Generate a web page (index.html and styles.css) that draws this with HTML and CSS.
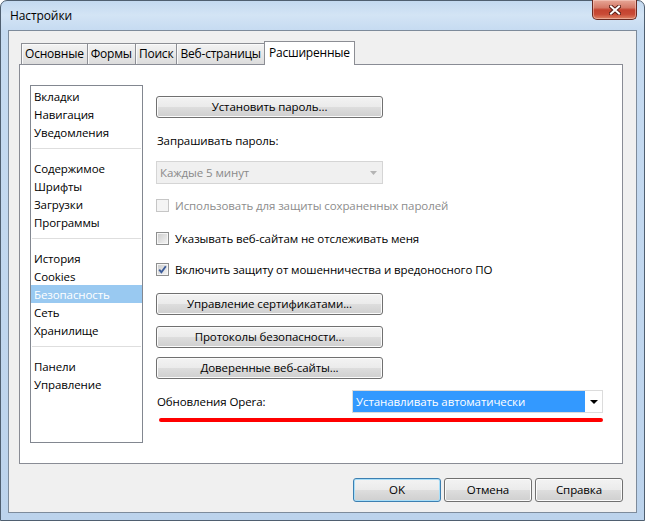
FILE: index.html
```html
<!DOCTYPE html>
<html lang="ru">
<head>
<meta charset="utf-8">
<title>Настройки</title>
<link rel="stylesheet" href="styles.css">
</head>
<body>
<div class="window">
  <div class="titlebar">
    <span class="title">Настройки</span>
    <div class="close">
      <svg width="12" height="10" viewBox="0 0 12 10"><path d="M2 1.5 L10 8.5 M10 1.5 L2 8.5" stroke="#5a1f17" stroke-width="4" stroke-linecap="square" fill="none"/><path d="M2 1.5 L10 8.5 M10 1.5 L2 8.5" stroke="#fff" stroke-width="2" stroke-linecap="square" fill="none"/></svg>
    </div>
  </div>
  <div class="client">
    <div class="tabs">
      <div class="tab t1">Основные</div>
      <div class="tab t2">Формы</div>
      <div class="tab t3">Поиск</div>
      <div class="tab t4">Веб-страницы</div>
      <div class="tab active t5">Расширенные</div>
    </div>
    <div class="panel">
      <div class="sidebar">
        <div class="item">Вкладки</div>
        <div class="item">Навигация</div>
        <div class="item">Уведомления</div>
        <div class="sep"></div>
        <div class="item">Содержимое</div>
        <div class="item">Шрифты</div>
        <div class="item">Загрузки</div>
        <div class="item">Программы</div>
        <div class="sep"></div>
        <div class="item">История</div>
        <div class="item">Cookies</div>
        <div class="item selected">Безопасность</div>
        <div class="item">Сеть</div>
        <div class="item">Хранилище</div>
        <div class="sep"></div>
        <div class="item">Панели</div>
        <div class="item">Управление</div>
      </div>
      <div class="content">
        <div class="btn wide m-pass">Установить пароль...</div>
        <div class="label m-ask">Запрашивать пароль:</div>
        <div class="combo disabled m-combo">
          <span class="combo-text">Каждые 5 минут</span>
          <span class="combo-arrow"><svg width="7" height="4" viewBox="0 0 7 4"><path d="M0 0 H7 L3.5 4 Z" fill="#b4b4b4"/></svg></span>
        </div>
        <div class="check disabled m-c1"><span class="cb"></span><span>Использовать для защиты сохраненных паролей</span></div>
        <div class="check m-c2"><span class="cb"></span><span>Указывать веб-сайтам не отслеживать меня</span></div>
        <div class="check m-c3"><span class="cb"><svg width="11" height="11" viewBox="0 0 11 11"><path d="M2.2 5.6 L4.4 8.2 L8.8 2.2" stroke="#3c5c9a" stroke-width="1.9" fill="none"/></svg></span><span>Включить защиту от мошенничества и вредоносного ПО</span></div>
        <div class="btn wide m-b1">Управление сертификатами...</div>
        <div class="btn wide m-b2">Протоколы безопасности...</div>
        <div class="btn wide m-b3">Доверенные веб-сайты...</div>
        <div class="update-row">
          <span class="update-label">Обновления Opera:</span>
          <div class="combo sel">
            <span class="combo-text">Устанавливать автоматически</span>
            <span class="combo-arrow"><svg width="8" height="4" viewBox="0 0 8 4"><path d="M0 0 H8 L4 4 Z" fill="#000"/></svg></span>
          </div>
        </div>
        <div class="redline"></div>
      </div>
    </div>
    <div class="footer">
      <div class="btn dlg default">OK</div>
      <div class="btn dlg">Отмена</div>
      <div class="btn dlg">Справка</div>
    </div>
  </div>
</div>
</body>
</html>
```
FILE: styles.css
```css
* { box-sizing: border-box; }
html, body { margin: 0; padding: 0; }
body {
  width: 645px;
  height: 521px;
  overflow: hidden;
  background: #fff;
  font-family: "Open Sans", "Noto Sans", "DejaVu Sans", sans-serif;
  font-size: 11.5px;
  letter-spacing: -0.1px;
  color: #000;
}
.window {
  width: 645px;
  height: 521px;
  border: 1px solid #4f5f70;
  border-radius: 7px 7px 0 0;
  background: linear-gradient(180deg, #c3d9f0 0px, #d3e4f5 14px, #c6dbf1 29px, #bcd3ec 100%);
  padding: 0 7px 7px 7px;
  display: flex;
  flex-direction: column;
}
.titlebar {
  height: 29px;
  display: flex;
  justify-content: space-between;
  align-items: flex-start;
  padding-left: 2px;
}
.title {
  margin-top: 7px;
  line-height: 16px;
  font-size: 12px;
}
.close {
  margin-top: -1px;
  width: 45px;
  height: 20px;
  border: 1px solid #6a2a22;
  border-top: none;
  border-radius: 0 0 5px 5px;
  background: linear-gradient(180deg, #e7a797 0%, #d57a68 40%, #c44330 52%, #c94a36 75%, #de8466 100%);
  box-shadow: inset 0 0 0 1px rgba(255,220,210,0.45);
  display: flex;
  align-items: center;
  justify-content: center;
}
.client {
  flex: 1;
  background: #f0f0f0;
  border: 1px solid #7d8b9b;
  padding: 10px 13px 0 10px;
  display: flex;
  flex-direction: column;
}
.tabs {
  height: 24px;
  margin-bottom: -1px;
  margin-left: 2px;
  display: flex;
  align-items: flex-start;
  position: relative;
  z-index: 1;
}
.tab {
  height: 21px;
  margin-top: 2px;
  margin-right: -1px;
  border: 1px solid #8c8e94;
  border-bottom: none;
  background: linear-gradient(180deg, #f3f3f3 0%, #e8e8e8 50%, #dcdcdc 100%);
  box-shadow: inset 1px 1px 0 #fafafa;
  padding: 0 3px;
  line-height: 20px;
  font-size: 12px;
  letter-spacing: -0.2px;
  white-space: nowrap;
}
.tab.active {
  height: 24px;
  margin-top: 0;
  margin-left: 0;
  background: #fff;
  box-shadow: none;
  line-height: 21px;
  padding: 0 4px;
  position: relative;
  z-index: 2;
}
.tab:nth-child(4) { margin-right: 0; border-right: none; }
.panel {
  height: 400px;
  background: #fff;
  border: 1px solid #898c95;
  padding: 20px 0 0 10px;
  display: flex;
  align-items: flex-start;
}
.sidebar {
  width: 113px;
  height: 358px;
  border: 1px solid #828790;
  padding-top: 1px;
}
.item {
  height: 18px;
  line-height: 19px;
  padding-left: 3px;
  white-space: nowrap;
}
.item.selected {
  background: #99c9f1;
  color: #fff;
}
.sep {
  height: 18px;
  position: relative;
}
.sep::after {
  content: "";
  position: absolute;
  left: 1px;
  right: 1px;
  top: 7px;
  height: 1px;
  background: #dedede;
}
.content {
  margin-left: 13px;
  width: 447px;
  display: flex;
  flex-direction: column;
  align-items: flex-start;
}
.btn {
  border: 1px solid #707070;
  border-radius: 3px;
  background: linear-gradient(180deg, #f3f3f3 0%, #ebebeb 48%, #dddddd 52%, #cfcfcf 100%);
  box-shadow: inset 0 0 0 1px #fbfbfb;
  text-align: center;
  white-space: nowrap;
}
.btn.wide {
  width: 227px;
  height: 22px;
  line-height: 20px;
}
.m-pass { margin-top: 11px; }
.label { line-height: 16px; margin-top: 15px; padding-left: 1px; }
.combo {
  height: 23px;
  display: flex;
  align-items: stretch;
  border: 1px solid #d5d5d5;
}
.combo.disabled {
  width: 227px;
  background: #f0f0f0;
  color: #8a8a8a;
}
.m-combo { margin-top: 12px; }
.combo-text {
  flex: 1;
  line-height: 21px;
  padding-left: 3px;
  white-space: nowrap;
}
.combo-arrow {
  width: 18px;
  display: flex;
  align-items: center;
  justify-content: center;
}
.check {
  height: 16px;
  display: flex;
  align-items: center;
  gap: 6px;
  white-space: nowrap;
}
.check.disabled { color: #8d8d8d; }
.cb {
  width: 13px;
  height: 13px;
  border: 1px solid #8e8f8f;
  background: linear-gradient(135deg, #cbcbcb 0%, #f5f5f5 100%);
  box-shadow: inset 0 0 0 1px #f6f6f6;
  display: flex;
  align-items: center;
  justify-content: center;
  flex: none;
}
.check.disabled .cb {
  border-color: #c6c6c6;
  background: #f4f4f4;
  box-shadow: none;
}
.m-c1 { margin-top: 13px; }
.m-c2 { margin-top: 17px; }
.m-c3 { margin-top: 15px; }
.m-b1 { margin-top: 16px; }
.m-b2 { margin-top: 11px; }
.m-b3 { margin-top: 9px; }
.update-row {
  margin-top: 11px;
  display: flex;
  align-items: center;
  width: 447px;
}
.update-label {
  width: 196px;
  padding-left: 1px;
  white-space: nowrap;
}
.combo.sel {
  width: 251px;
  border-color: #dcdcdc;
  background: #fff;
}
.combo.sel .combo-text {
  background: #3399ff;
  color: #fff;
  padding-left: 3px;
}
.combo.sel .combo-arrow { width: 17px; }
.redline {
  margin-top: 5px;
  margin-left: 3px;
  width: 444px;
  height: 4px;
  background: #ff0000;
  border-radius: 2px;
}
.footer {
  display: flex;
  justify-content: flex-end;
  gap: 3px;
  padding-top: 14px;
}
.btn.dlg {
  width: 88px;
  height: 24px;
  line-height: 22px;
}
.btn.default {
  border-color: #3c7fb1;
  box-shadow: inset 0 0 0 1px #a8def8;
}
```
